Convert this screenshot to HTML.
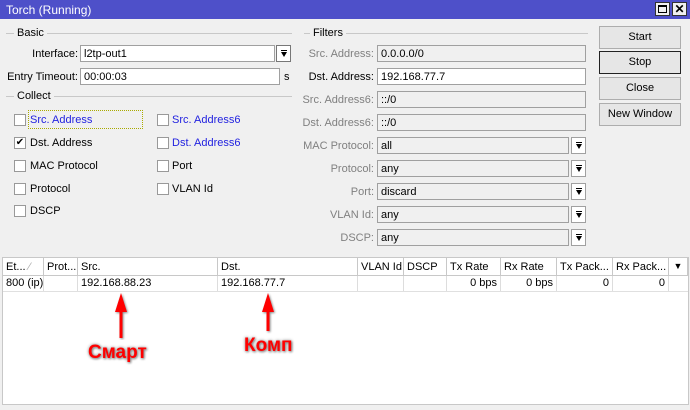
<!DOCTYPE html>
<html><head><meta charset="utf-8"><style>
*{box-sizing:border-box;margin:0;padding:0}
body{width:690px;height:410px;overflow:hidden;background:#f0f0f0;font-family:"Liberation Sans",sans-serif;font-size:11px;color:#000;position:relative}
.a{position:absolute}
.tb{left:0;top:0;width:690px;height:19px;background:#4e50c9;color:#fff;font-size:12px;padding:3px 6px}
.wb{top:2px;width:15px;height:14px;background:#f0f0f0;border:1px solid #333}
.grp{height:1px;background:#c8c8c8}
.gl{background:#f0f0f0;padding:0 3px}
.lbl{text-align:right;white-space:nowrap}
.in{height:17px;border:1px solid #a0a0a0;background:#fff;padding:2px 3px 0;white-space:nowrap}
.dis{background:#f0f0f0}
.dd{width:15px;height:17px;border:1px solid #a0a0a0;background:#fff}
.dd:before{content:"";position:absolute;left:4px;top:4px;width:6px;height:1px;background:#000}
.dd:after{content:"";position:absolute;left:4px;top:6px;border-left:3px solid transparent;border-right:3px solid transparent;border-top:5px solid #000}
.cb{width:12px;height:12px;border:1px solid #999;background:#fff;font-size:10px;line-height:10px;text-align:center}
.btn{left:599px;width:82px;height:23px;border:1px solid #adadad;background:#e6e6e6;text-align:center;line-height:21px;font-size:11px}
.hd{top:258px;height:18px;border-right:1px solid #c8c8c8;padding:3px 3px;white-space:nowrap;overflow:hidden;background:#fff}
.cl{top:276px;height:15px;border-right:1px solid #ddd;padding:1px 3px;white-space:nowrap}
.r{text-align:right}
.red{color:#f00;font-weight:bold;font-size:19px;text-shadow:0 0 3px #888,1px 1px 2px #888}
</style></head><body>
<div class="a tb">Torch (Running)</div>
<div class="a wb" style="left:655px"><div style="margin:2px;width:9px;height:8px;border:1px solid #000;border-top-width:2px"></div></div>
<div class="a wb" style="left:672px;font-size:12px;font-weight:bold;text-align:center;line-height:12px">✕</div>

<div class="a grp" style="left:6px;top:33px;width:286px"></div>
<div class="a gl" style="left:14px;top:27px">Basic</div>
<div class="a lbl" style="left:0;width:78px;top:48px">Interface:</div>
<div class="a in" style="left:80px;top:45px;width:195px">l2tp-out1</div>
<div class="a dd" style="left:276px;top:45px;border-color:#777"></div>
<div class="a lbl" style="left:0;width:78px;top:71px">Entry Timeout:</div>
<div class="a in" style="left:80px;top:68px;width:200px">00:00:03</div>
<div class="a" style="left:284px;top:71px">s</div>
<div class="a grp" style="left:6px;top:96px;width:286px"></div>
<div class="a gl" style="left:14px;top:90px">Collect</div>

<div class="a" style="left:28px;top:110px;width:115px;height:19px;border:1px dotted #aa0"></div>
<div class="a cb" style="left:14px;top:114px"></div><div class="a" style="left:30px;top:114px;color:#2222e0">Src. Address</div>
<div class="a cb" style="left:157px;top:114px"></div><div class="a" style="left:172px;top:114px;color:#2222e0">Src. Address6</div>
<div class="a cb" style="left:14px;top:137px">✔</div><div class="a" style="left:30px;top:137px">Dst. Address</div>
<div class="a cb" style="left:157px;top:137px"></div><div class="a" style="left:172px;top:137px;color:#2222e0">Dst. Address6</div>
<div class="a cb" style="left:14px;top:160px"></div><div class="a" style="left:30px;top:160px">MAC Protocol</div>
<div class="a cb" style="left:157px;top:160px"></div><div class="a" style="left:172px;top:160px">Port</div>
<div class="a cb" style="left:14px;top:183px"></div><div class="a" style="left:30px;top:183px">Protocol</div>
<div class="a cb" style="left:157px;top:183px"></div><div class="a" style="left:172px;top:183px">VLAN Id</div>
<div class="a cb" style="left:14px;top:205px"></div><div class="a" style="left:30px;top:205px">DSCP</div>

<div class="a grp" style="left:304px;top:33px;width:284px"></div>
<div class="a gl" style="left:310px;top:27px">Filters</div>
<div class="a lbl" style="left:290px;width:84px;top:48px;color:#808080">Src. Address:</div>
<div class="a in dis" style="left:377px;top:45px;width:209px">0.0.0.0/0</div>
<div class="a lbl" style="left:290px;width:84px;top:71px">Dst. Address:</div>
<div class="a in" style="left:377px;top:68px;width:209px">192.168.77.7</div>
<div class="a lbl" style="left:290px;width:84px;top:94px;color:#808080">Src. Address6:</div>
<div class="a in dis" style="left:377px;top:91px;width:209px">::/0</div>
<div class="a lbl" style="left:290px;width:84px;top:117px;color:#808080">Dst. Address6:</div>
<div class="a in dis" style="left:377px;top:114px;width:209px">::/0</div>

<div class="a lbl" style="left:290px;width:84px;top:140px;color:#808080">MAC Protocol:</div>
<div class="a in dis" style="left:377px;top:137px;width:192px">all</div><div class="a dd" style="left:571px;top:137px"></div>
<div class="a lbl" style="left:290px;width:84px;top:163px;color:#808080">Protocol:</div>
<div class="a in dis" style="left:377px;top:160px;width:192px">any</div><div class="a dd" style="left:571px;top:160px"></div>
<div class="a lbl" style="left:290px;width:84px;top:186px;color:#808080">Port:</div>
<div class="a in dis" style="left:377px;top:183px;width:192px">discard</div><div class="a dd" style="left:571px;top:183px"></div>
<div class="a lbl" style="left:290px;width:84px;top:209px;color:#808080">VLAN Id:</div>
<div class="a in dis" style="left:377px;top:206px;width:192px">any</div><div class="a dd" style="left:571px;top:206px"></div>
<div class="a lbl" style="left:290px;width:84px;top:232px;color:#808080">DSCP:</div>
<div class="a in dis" style="left:377px;top:229px;width:192px">any</div><div class="a dd" style="left:571px;top:229px"></div>

<div class="a btn" style="top:26px">Start</div>
<div class="a btn" style="top:51px;border-color:#222">Stop</div>
<div class="a btn" style="top:77px">Close</div>
<div class="a btn" style="top:103px">New Window</div>

<div class="a" style="left:2px;top:257px;width:687px;height:148px;background:#fff;border:1px solid #c8c8c8"></div>
<div class="a hd" style="left:3px;width:41px">Et... <span style="color:#aaa">⁄</span></div>
<div class="a hd" style="left:44px;width:34px">Prot...</div>
<div class="a hd" style="left:78px;width:140px">Src.</div>
<div class="a hd" style="left:218px;width:140px">Dst.</div>
<div class="a hd" style="left:358px;width:46px">VLAN Id</div>
<div class="a hd" style="left:404px;width:43px">DSCP</div>
<div class="a hd" style="left:447px;width:54px">Tx Rate</div>
<div class="a hd" style="left:501px;width:56px">Rx Rate</div>
<div class="a hd" style="left:557px;width:56px">Tx Pack...</div>
<div class="a hd" style="left:613px;width:56px">Rx Pack...</div>
<div class="a hd" style="left:669px;width:19px;font-size:9px;text-align:center">&#9660;</div>
<div class="a" style="left:3px;top:275px;width:685px;height:1px;background:#c8c8c8"></div>
<div class="a cl" style="left:3px;width:41px">800 (ip)</div>
<div class="a cl" style="left:44px;width:34px"></div>
<div class="a cl" style="left:78px;width:140px">192.168.88.23</div>
<div class="a cl" style="left:218px;width:140px">192.168.77.7</div>
<div class="a cl" style="left:358px;width:46px"></div>
<div class="a cl" style="left:404px;width:43px"></div>
<div class="a cl r" style="left:447px;width:54px">0 bps</div>
<div class="a cl r" style="left:501px;width:56px">0 bps</div>
<div class="a cl r" style="left:557px;width:56px">0</div>
<div class="a cl r" style="left:613px;width:56px">0</div>
<div class="a" style="left:3px;top:291px;width:685px;height:1px;background:#e0e0e0"></div>

<svg class="a" style="left:100px;top:290px" width="200" height="50">
<g fill="#f00" style="filter:drop-shadow(1px 1px 1px #888)">
<polygon points="21,3 15,22 19.5,22 19.5,48 22.5,48 22.5,22 27,22"/>
<polygon points="168,3 162,22 166.5,22 166.5,41 169.5,41 169.5,22 174,22"/>
</g></svg>
<div class="a red" style="left:88px;top:342px">Смарт</div>
<div class="a red" style="left:244px;top:335px">Комп</div>
</body></html>
